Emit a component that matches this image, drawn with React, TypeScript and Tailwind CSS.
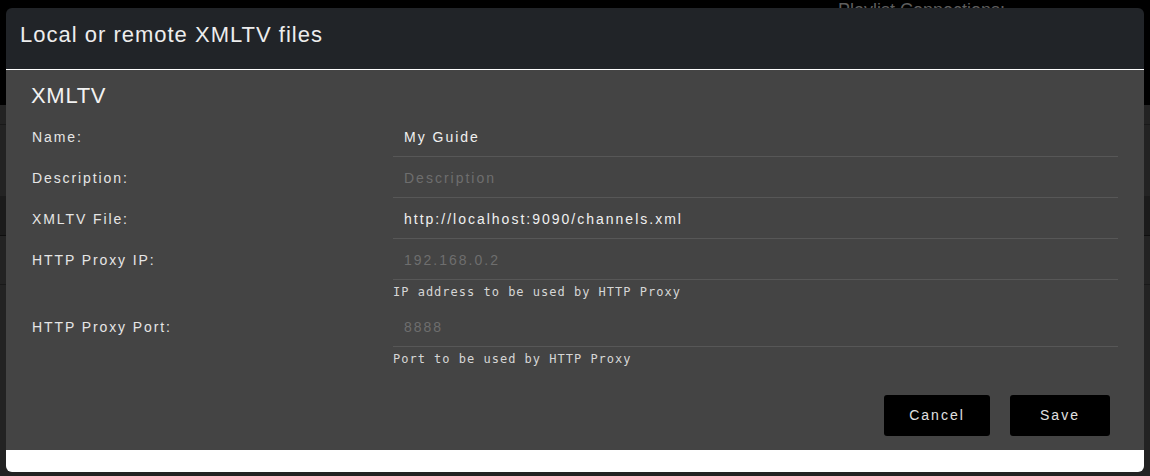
import React from "react";

const sans = { fontFamily: '"Liberation Sans", Arial, sans-serif' };

interface Field {
  label: string;
  value?: string;
  placeholder: string;
  help?: string;
}

const fields: Field[] = [
  { label: "Name:", value: "My Guide", placeholder: "Name" },
  { label: "Description:", placeholder: "Description" },
  { label: "XMLTV File:", value: "http://localhost:9090/channels.xml", placeholder: "URL" },
  { label: "HTTP Proxy IP:", placeholder: "192.168.0.2", help: "IP address to be used by HTTP Proxy" },
  { label: "HTTP Proxy Port:", placeholder: "8888", help: "Port to be used by HTTP Proxy" },
];

function FieldRow({ field }: { field: Field }) {
  return (
    <div className="flex">
      <label className="flex h-[40px] w-[361px] shrink-0 items-center pt-[2px] text-[14px] tracking-[1.9px] text-[#e6e6e6]">
        {field.label}
      </label>
      <div className="flex flex-1 flex-col">
        <input
          readOnly
          defaultValue={field.value}
          placeholder={field.placeholder}
          className="h-[41px] w-full border-b border-[#575757] bg-transparent pt-[1px] pl-[11px] text-[14px] tracking-[2px] text-[#f0f0f0] outline-none placeholder:text-[#6e6e6e]"
          style={sans}
        />
        {field.help ? (
          <p
            className="mt-[4px] mb-[6px] text-[12px] leading-[16px] tracking-[1px] text-[#d6d6d6]"
            style={{ fontFamily: '"DejaVu Sans Mono", monospace' }}
          >
            {field.help}
          </p>
        ) : null}
      </div>
    </div>
  );
}

export default function App() {
  return (
    <div className="relative h-[476px] w-[1150px] overflow-hidden bg-[#232323]" style={sans}>
      {/* page behind the backdrop */}
      <div className="h-[105px] bg-black pl-[838px] pt-[1px] text-[18px] leading-none text-[#5e5e5e]">
        Playlist Connections:
      </div>
      <div className="h-[20px] border-b border-[#191919]" />
      <div className="h-[71px]" />
      <div className="h-[40px] border-b border-[#0e0e0e] bg-[#1b1b1b]" />
      <div className="h-[49px] border-b border-[#191919]" />

      {/* modal */}
      <div className="absolute top-[8px] left-[6px] flex h-[464px] w-[1138px] flex-col overflow-hidden rounded-[6px]">
        <div className="h-[62px] border-b border-white bg-[#212428] pt-[14px] pl-[14px]">
          <h2 className="text-[22px] leading-[26px] tracking-[1px] text-[#ededed]">
            Local or remote XMLTV files
          </h2>
        </div>
        <div className="flex flex-1 flex-col bg-[#444444] px-[26px] pt-[13px]">
          <h3 className="mb-[7px] -ml-[1px] text-[22px] leading-[26px] tracking-[0.7px] text-[#f2f2f2]">
            XMLTV
          </h3>
          {fields.map((f) => (
            <FieldRow key={f.label} field={f} />
          ))}
          <div className="mt-[22px] flex justify-end gap-[20px] pr-[8px]">
            <button className="h-[41px] w-[106px] rounded-[3px] bg-black text-[14px] tracking-[2px] text-[#e0e0e0]">
              Cancel
            </button>
            <button className="h-[41px] w-[100px] rounded-[3px] bg-black text-[14px] tracking-[2px] text-[#e0e0e0]">
              Save
            </button>
          </div>
        </div>
        <div className="h-[22px] bg-white" />
      </div>
    </div>
  );
}
